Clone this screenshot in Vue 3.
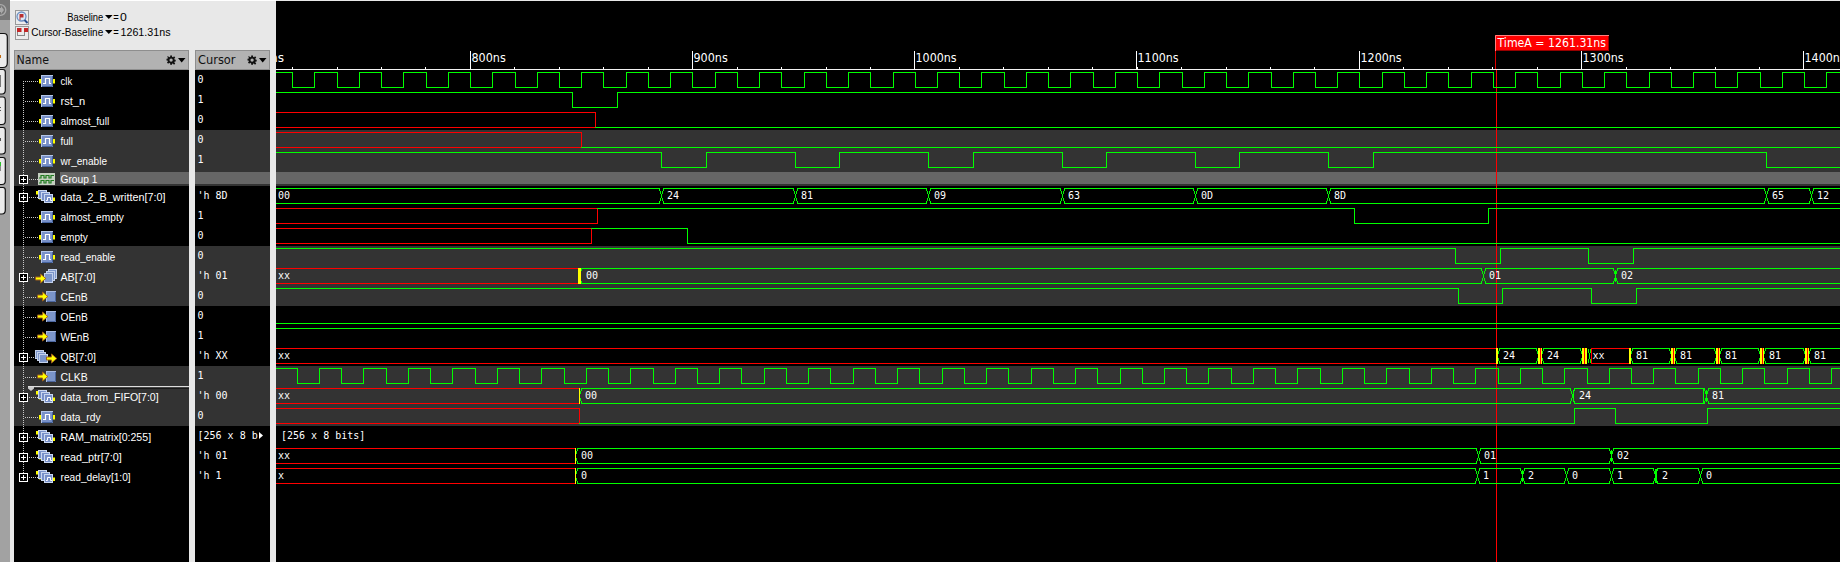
<script setup>
const LEFT = 276
const RIGHT = 1840
const HI = 2.5
const LO = 17.5

const clock = (first, step) =>
  Array.from({ length: 70 }, (_, k) => Math.floor(first + step * k)).filter((x) => x < RIGHT)

// Square wave that starts at `level` and toggles on every edge
function digital(level, edges, from = LEFT) {
  let high = level
  let d = `M${from} ${high ? HI : LO}`
  for (const x of edges) {
    high = !high
    d += `H${x + 0.5}V${high ? HI : LO}`
  }
  return d + `H${RIGHT}`
}

const unknownTo = (x) => `M${LEFT} ${HI}H${x + 0.5}V${LO}H${LEFT}`
const openUnknown = (x) => `M${LEFT} ${HI}H${x}M${LEFT} ${LO}H${x}`

// Bus rails between crossings
function bus(from, crossings, to = RIGHT, closed = false) {
  let d = ''
  const opening = (x) => `M${x + 0.5} 3V5M${x - 0.5} 5V8M${x - 1.5} 8V12M${x - 0.5} 12V15M${x + 0.5} 15V17`
  const closing = (x) => `M${x - 1.5} 3V5M${x - 0.5} 5V8M${x + 0.5} 8V12M${x - 0.5} 12V15M${x - 1.5} 15V17`
  let start = from
  if (from > LEFT) d += opening(from)
  for (const c of crossings) {
    d += `M${start} ${HI}H${c - 1}M${start} ${LO}H${c - 1}`
    d += closing(c) + opening(c + 2)
    start = c + 2
  }
  d += `M${start} ${HI}H${to}M${start} ${LO}H${to}`
  if (closed) d += closing(to + 1)
  return d
}

const g = (d) => ({ d, cls: 'green' })
const r = (d) => ({ d, cls: 'red' })
const glitch = (x) => [
  { x, w: 2, cls: 'fill-yellow' },
  { x: x + 2, w: 1, cls: 'fill-red' },
  { x: x + 3, w: 1, cls: 'fill-yellow' },
]

const rows = [
  { name: 'clk', w: 11.7, icon: 'sig', value: '0', paths: [g(digital(true, clock(292.7, 22.235)))] },
  { name: 'rst_n', w: 24.7, icon: 'sig', value: '1', paths: [g(digital(true, [572, 617]))] },
  { name: 'almost_full', w: 48.7, icon: 'sig', value: '0', paths: [r(unknownTo(595)), g(digital(false, [], 595))] },
  { name: 'full', w: 12.4, icon: 'sig', value: '0', shade: true, paths: [r(unknownTo(581)), g(digital(false, [], 581))] },
  {
    name: 'wr_enable', w: 46.5, icon: 'sig', value: '1', shade: true,
    paths: [g(digital(true, [661, 706, 795, 839, 928, 973, 1062, 1106, 1195, 1239, 1328, 1373, 1766]))],
  },
  { name: 'Group 1', w: 37, icon: 'group', value: '', shade: true, group: true, plus: true, paths: [] },
  {
    name: 'data_2_B_written[7:0]', w: 105, icon: 'bus', value: "'h 8D", plus: true,
    paths: [g(bus(LEFT, [661, 795, 928, 1062, 1195, 1328, 1766, 1811]))],
    texts: [[278, '00'], [667, '24'], [801, '81'], [934, '09'], [1068, '63'], [1201, '0D'], [1334, '8D'], [1772, '65'], [1817, '12']],
  },
  { name: 'almost_empty', w: 63.3, icon: 'sig', value: '1', paths: [r(unknownTo(597)), g(digital(true, [1354, 1488], 597))] },
  { name: 'empty', w: 27.4, icon: 'sig', value: '0', paths: [r(unknownTo(591)), g(digital(true, [687], 591))] },
  { name: 'read_enable', w: 54.8, icon: 'sig', value: '0', shade: true, paths: [g(digital(true, [1455, 1500, 1588, 1633]))] },
  {
    name: 'AB[7:0]', w: 35, icon: 'inbus', value: "'h 01", shade: true, plus: true,
    paths: [r(openUnknown(578)), g(bus(581, [1483, 1615]) + 'M1615.5 4V8M1615.5 12V16')],
    bars: [{ x: 578, w: 3, cls: 'fill-yellow' }],
    texts: [[278, 'xx'], [586, '00'], [1489, '01'], [1621, '02']],
  },
  { name: 'CEnB', w: 27.3, icon: 'in', value: '0', shade: true, paths: [g(digital(true, [1458, 1502, 1591, 1636]))] },
  { name: 'OEnB', w: 27.3, icon: 'in', value: '0', paths: [g(digital(false, []))] },
  { name: 'WEnB', w: 28.7, icon: 'in', value: '1', paths: [g(digital(true, []))] },
  {
    name: 'QB[7:0]', w: 35.4, icon: 'outbus', value: "'h XX", plus: true,
    paths: [
      r(openUnknown(1496)),
      g(bus(1499, [], 1537, true)),
      g(bus(1543, [], 1581, true)),
      g('M1588.5 3V7M1590.5 3V7M1589.5 7V13M1588.5 13V17M1590.5 13V17'),
      r(`M1629 ${HI}H1591.5V${LO}H1629`),
      g(bus(1632, [], 1670, true)),
      g(bus(1676, [], 1715, true)),
      g(bus(1721, [], 1759, true)),
      g(bus(1765, [], 1804, true)),
      g(bus(1810, [])),
    ],
    bars: [
      { x: 1496, w: 2, cls: 'fill-yellow' },
      ...glitch(1538), ...glitch(1582),
      { x: 1586, w: 1, cls: 'fill-yellow' },
      { x: 1629, w: 2, cls: 'fill-yellow' },
      ...glitch(1671), ...glitch(1716), ...glitch(1760), ...glitch(1805),
    ],
    texts: [[278, 'xx'], [1503, '24'], [1547, '24'], [1592.5, 'xx'], [1636, '81'], [1680, '81'], [1725, '81'], [1769, '81'], [1814, '81']],
  },
  { name: 'CLKB', w: 27.3, icon: 'in', value: '1', shade: true, paths: [g(digital(true, clock(297.2, 22.238)))] },
  {
    name: 'data_from_FIFO[7:0]', w: 98.2, icon: 'bus', value: "'h 00", shade: true, plus: true, marker: true,
    paths: [
      r(openUnknown(579)),
      g(bus(581, [1572, 1706]) + 'M1573.5 4V16M1703.5 3V17M1706.5 4V16'),
    ],
    bars: [{ x: 579, w: 1, cls: 'fill-yellow' }],
    texts: [[278, 'xx'], [585, '00'], [1579, '24'], [1712, '81']],
  },
  { name: 'data_rdy', w: 40.2, icon: 'sig', value: '0', shade: true, paths: [r(unknownTo(579)), g(digital(false, [1574, 1615, 1707], 579))] },
  { name: 'RAM_matrix[0:255]', w: 90.6, icon: 'bus', value: '[256 x 8 b', more: true, plus: true, paths: [], texts: [[281, '[256 x 8 bits]']] },
  {
    name: 'read_ptr[7:0]', w: 61.2, icon: 'bus', value: "'h 01", plus: true,
    paths: [r(openUnknown(575)), g(bus(577, [1478, 1611]) + 'M1611.5 4V16')],
    bars: [{ x: 575, w: 1, cls: 'fill-yellow' }],
    texts: [[278, 'xx'], [581, '00'], [1484, '01'], [1617, '02']],
  },
  {
    name: 'read_delay[1:0]', w: 70.2, icon: 'bus', value: "'h 1", plus: true,
    paths: [r(openUnknown(575)), g(bus(577, [1477, 1522, 1566, 1611, 1655, 1700]) + 'M1522.5 4V16M1655.5 3V17M1656.5 3V17')],
    bars: [{ x: 575, w: 1, cls: 'fill-yellow' }],
    texts: [[278, 'x'], [581, '0'], [1483, '1'], [1528, '2'], [1572, '0'], [1617, '1'], [1662, '2'], [1706, '0']],
  },
]

const majors = [
  [470, '800ns'], [692, '900ns'], [914, '1000ns'], [1136, '1100ns'],
  [1359, '1200ns'], [1581, '1300ns'], [1803, '1400ns'],
]
const minors = Array.from({ length: 35 }, (_, i) => Math.floor(292.6 + i * 44.45)).filter((x) => x < RIGHT)

const gearPath =
  'M4 0h2v1.4l1.2.5 1-1 1.3 1.4-1 1 .4 1.2H10v2H8.9l-.4 1.1 1 1-1.3 1.4-1.1-1L6 8.600V10H4V8.600L2.900 8l-1.100 1L.500 7.600l1-1-.400-1.100H0v-2h1.100l.400-1.200-1-1L1.800.900l1 1L4 1.400z'
</script>

<template>
  <div class="viewer">
    <aside class="toolbar">
      <svg width="10" height="562" viewBox="0 0 10 562">
        <rect width="10" height="562" fill="#a2a2a2" />
        <rect width="10" height="20" fill="#777" />
        <circle cx="0.500" cy="10" r="5.300" fill="none" stroke="#aaa" stroke-width="1.300" />
        <path d="M-2 8H1V6L4 10L1 14V12H-2Z" fill="#aaa" />
        <g fill="#ebebeb" stroke="#111" stroke-width="1.200">
          <path d="M-2 33.500H4Q7.300 33.500 7.300 37V63Q7.300 67.500 3 67.500H-2Z" />
          <path d="M-2 69.500H3Q5.300 69.500 5.300 72V90Q5.300 94 2 94H-2Z" />
          <path d="M-2 97H3Q5.300 97 5.300 100V121Q5.300 124.500 2 124.500H-2Z" />
          <path d="M-2 127.500H3Q5.300 127.500 5.300 130V151Q5.300 154 2 154H-2Z" />
          <path d="M-2 157.500H3Q5.300 157.500 5.300 160V181Q5.300 184.500 2 184.500H-2Z" />
          <path d="M-2 187.500H3Q5.300 187.500 5.300 190V210Q5.300 214 2 214H-2Z" />
        </g>
        <rect y="55" width="1" height="3" fill="#c26a10" />
        <rect y="75" width="1" height="12" fill="#777" />
        <path d="M0 107.500H1M0 110.500H1" stroke="#555" />
        <rect y="138" width="1" height="3" fill="#555" />
        <rect y="162" width="1" height="4" fill="#2bc22b" />
        <rect y="166" width="1" height="5" fill="#888" />
      </svg>
    </aside>

    <section class="panel">
      <header class="summary">
        <svg width="266" height="50" viewBox="10 0 266 50">
          <rect x="10" y="0" width="266" height="1" fill="#fff" />
          <g fill="#ececec" stroke="#999">
            <rect x="15.500" y="10.500" width="13" height="14" />
            <rect x="15.500" y="26.500" width="13" height="13" />
          </g>
          <circle cx="21.500" cy="16.500" r="4.500" fill="#dce8f5" stroke="#6d8fc0" stroke-width="1.300" />
          <path d="M24.500 20L27.500 23" stroke="#284f8e" stroke-width="2" />
          <path d="M19.500 14H23.500V17.500H20.500V20H19.500Z" fill="#b93030" />
          <path d="M17.500 36V28M24.500 36V28M18 35.500H24" stroke="#888" fill="none" />
          <path d="M17 28H21.500V32H17ZM24 28H28V32H24Z" fill="#c32626" />
          <g class="ui">
            <text x="67.300" y="21" textLength="36" lengthAdjust="spacingAndGlyphs">Baseline</text>
            <text x="113.300" y="21" textLength="5.500" lengthAdjust="spacingAndGlyphs">=</text>
            <text x="120" y="21" textLength="6.800" lengthAdjust="spacingAndGlyphs">0</text>
            <text x="31.300" y="36" textLength="72" lengthAdjust="spacingAndGlyphs">Cursor-Baseline</text>
            <text x="113.300" y="36" textLength="5.500" lengthAdjust="spacingAndGlyphs">=</text>
            <text x="120.500" y="36" textLength="50" lengthAdjust="spacingAndGlyphs">1261.31ns</text>
          </g>
          <path d="M105 15H112.600L108.800 19ZM105 30H112.600L108.800 34Z" fill="#000" />
        </svg>
      </header>

      <div class="columns">
        <div class="column names">
          <div class="heading">
            <svg width="175" height="20" viewBox="14 50 175 20">
              <text class="title" x="16.500" y="64" textLength="32.500" lengthAdjust="spacingAndGlyphs">Name</text>
              <g transform="translate(166.500 55.500) scale(.92)"><path :d="gearPath" fill="#111" /><circle cx="5" cy="5" r="1.800" fill="#b2b2b2" /></g>
              <path d="M178 58H185.500L181.700 62.500Z" fill="#000" />
            </svg>
          </div>
          <div v-for="row in rows" :key="row.name" class="row" :class="{ shade: row.shade, group: row.group }">
            <svg width="175" height="20" :viewBox="row.group ? '14 2 175 16' : '14 0 175 20'">
              <rect v-if="row.group" x="60" y="4" width="129" height="12" fill="#666" />
              <path class="dots" :d="row.name === 'clk' ? 'M23.500 11V22' : row.name === 'read_delay[1:0]' ? 'M23.500 0V7' : 'M23.500 0V20'" />
              <path class="dots" :d="row.plus ? 'M29 11.500H38' : 'M25 11.500H39'" />
              <g v-if="row.plus" shape-rendering="crispEdges">
                <rect x="19.500" y="7.500" width="8" height="8" fill="#000" stroke="#fff" />
                <path d="M21 11.500H26M23.500 9V14" stroke="#fff" />
              </g>

              <g v-if="row.icon === 'sig'">
                <path d="M39 9H41V13.500H39ZM53 9H55V13.500H53Z" fill="#ff0" />
                <rect x="41.500" y="5.500" width="11" height="11" fill="#7890c8" stroke="#b5c6e6" />
                <path d="M42 16.500H52.500V6" fill="none" stroke="#46649f" />
                <path d="M43 13.500H45.500V8.500H49.500V13.500H51" fill="none" stroke="#fff" stroke-width="1.200" />
              </g>
              <g v-else-if="row.icon === 'bus'">
                <path d="M36 5H38V8.500H36ZM39 10H41V13.500H39ZM53 11.500H55V15H53Z" fill="#ff0" />
                <g fill="#7890c8" stroke="#cbd8f0">
                  <rect x="38.500" y="4.500" width="8" height="8" />
                  <rect x="41.500" y="6.500" width="8" height="8" />
                  <rect x="44.500" y="8.500" width="8" height="8" />
                </g>
                <path d="M46 14.500H47.500V11.500H50.500V14.500H52" fill="none" stroke="#fff" />
              </g>
              <g v-else-if="row.icon === 'group'">
                <rect x="38" y="5" width="17" height="12" fill="#c4cfc0" />
                <path d="M39 10H41V7.500H44V10H46V7.500H49V10H51V7.500H54M39 15H41V12.500H44V15H46V12.500H49V15H51V12.500H54" fill="none" stroke="#1f7a1f" stroke-width="1.200" />
              </g>
              <g v-else-if="row.icon === 'in'">
                <rect x="46.500" y="5.500" width="9" height="10" fill="#7c95c9" stroke="#a9badf" />
                <path d="M47 15.500H55.500V6" fill="none" stroke="#4c669e" />
                <path class="arrow" d="M37.500 9H42.500V6L47.800 10.500L42.500 15V12H37.500Z" />
              </g>
              <g v-else-if="row.icon === 'inbus'">
                <g fill="#7c95c9" stroke="#c3d0ea">
                  <rect x="48.500" y="3.500" width="8" height="9" />
                  <rect x="46.500" y="5.500" width="8" height="9" />
                  <rect x="44.500" y="7.500" width="8" height="9" />
                </g>
                <path class="arrow" d="M35.500 11H40.500V8L45.800 12.500L40.500 17V14H35.500Z" />
              </g>
              <g v-else>
                <g fill="#7c95c9" stroke="#c3d0ea">
                  <rect x="35.500" y="4.500" width="8" height="8" />
                  <rect x="37.500" y="6.500" width="8" height="8" />
                  <rect x="39.500" y="8.500" width="8" height="8" />
                </g>
                <path class="arrow" d="M46.500 11H51.500V8L56.800 12.500L51.500 17V14H46.500Z" />
              </g>

              <text class="label" x="60.500" y="15" :textLength="row.w" lengthAdjust="spacingAndGlyphs">{{ row.name }}</text>
              <g v-if="row.marker">
                <rect x="28" y="0" width="161" height="1.500" fill="#ddd" />
                <rect x="34" y="1.500" width="155" height="1" fill="#000" />
                <path d="M28 1H34V2.500L31 5L28 2.500Z" fill="#ccc" />
              </g>
            </svg>
          </div>
        </div>

        <div class="column values">
          <div class="heading">
            <svg width="75" height="20" viewBox="195 50 75 20">
              <text class="title" x="198" y="64" textLength="37.500" lengthAdjust="spacingAndGlyphs">Cursor</text>
              <g transform="translate(247.500 55.500) scale(.92)"><path :d="gearPath" fill="#111" /><circle cx="5" cy="5" r="1.800" fill="#b2b2b2" /></g>
              <path d="M259 58H266.500L262.700 62.500Z" fill="#000" />
            </svg>
          </div>
          <div v-for="row in rows" :key="row.name" class="row" :class="{ shade: row.shade, group: row.group, band: row.group }">
            <svg width="75" height="20" viewBox="195 0 75 20">
              <text class="mono" x="197.500" y="13" xml:space="preserve">{{ row.value }}</text>
              <path v-if="row.more" d="M259 6L263 9.500L259 13Z" fill="#fff" />
            </svg>
          </div>
        </div>
      </div>
    </section>

    <main class="waves">
      <svg class="ruler" width="1564" height="69" viewBox="276 1 1564 69">
        <g shape-rendering="crispEdges">
          <rect x="276" y="69" width="1564" height="1" fill="#f2f2f2" />
          <rect v-for="x in minors" :key="x" :x="x" y="67" width="1" height="2" fill="#fff" />
          <rect v-for="m in majors" :key="m[0]" :x="m[0]" y="51" width="1" height="18" fill="#fff" />
        </g>
        <text class="time" x="270" y="62" textLength="14" lengthAdjust="spacingAndGlyphs">ns</text>
        <text
          v-for="m in majors" :key="m[1]" class="time" :x="m[0] + 1.500" y="62"
          :textLength="m[1].length * 6.850" lengthAdjust="spacingAndGlyphs"
        >{{ m[1] }}</text>
        <rect x="1495" y="51" width="1" height="18" fill="#e00000" />
        <rect x="1495" y="35" width="114" height="16" fill="#f00" />
        <path d="M1495.500 51V35.500H1609" stroke="#ff8080" fill="none" />
        <path d="M1496 50.500H1608.500V36" stroke="#900" fill="none" />
        <text class="time" x="1497.500" y="47" textLength="108.500" lengthAdjust="spacingAndGlyphs">TimeA = 1261.31ns</text>
      </svg>
      <div class="cursor-line"></div>
      <div v-for="row in rows" :key="row.name" class="row" :class="{ shade: row.shade, group: row.group, band: row.group }">
        <svg class="trace" width="1564" height="20" viewBox="276 0 1564 20">
          <g shape-rendering="crispEdges">
            <path v-for="(p, i) in row.paths" :key="i" :d="p.d" :class="p.cls" />
            <rect v-for="b in row.bars || []" :key="b.x" :x="b.x" y="2" :width="b.w" height="16" :class="b.cls" />
          </g>
          <text v-for="t in row.texts || []" :key="t[0]" class="mono" :x="t[0]" y="13">{{ t[1] }}</text>
        </svg>
      </div>
    </main>
  </div>
</template>

<style>
body {
  margin: 0;
  background: #000;
}
</style>

<style scoped>
.viewer {
  display: flex;
  width: 1840px;
  height: 562px;
  overflow: hidden;
  background: #e8e8e8;
}
svg {
  display: block;
}
.toolbar {
  width: 10px;
  flex: none;
}
.panel {
  width: 266px;
  flex: none;
  display: flex;
  flex-direction: column;
  background: #e8e8e8;
}
.summary {
  height: 50px;
  box-sizing: border-box;
}
.columns {
  flex: 1;
  display: flex;
  gap: 6px;
  padding-left: 4px;
}
.column {
  background: #000;
}
.names {
  width: 175px;
}
.values {
  width: 75px;
}
.heading {
  height: 20px;
  background: #b2b2b2;
  box-shadow: inset 0 0 0 1px #8e8e8e;
}
.row {
  height: 20px;
  overflow: hidden;
}
.row.shade {
  background: #333;
}
.row.group {
  height: 16px;
}
.row.group svg {
  height: 16px;
}
.row.band {
  background: linear-gradient(#333 2px, #666 2px, #666 14px, #333 14px);
}
.waves {
  position: relative;
  flex: 1;
  margin-top: 1px;
  background: #000;
  overflow: hidden;
}
.cursor-line {
  position: absolute;
  top: 69px;
  bottom: 0;
  left: 1220px;
  width: 1px;
  background: #f00;
}
.trace {
  position: relative;
}
.green {
  fill: none;
  stroke: #0f0;
}
.red {
  fill: none;
  stroke: #f00;
}
.fill-yellow {
  fill: #ff0;
}
.fill-red {
  fill: #f00;
}
.arrow {
  fill: #ff0;
  stroke: #a0601a;
  stroke-width: 1;
}
.dots {
  fill: none;
  stroke: #c8c8c8;
  stroke-dasharray: 1 1;
  shape-rendering: crispEdges;
}
.ui text {
  font: 11.5px "Liberation Sans", Arial, sans-serif;
  fill: #000;
}
.title {
  font: 11.5px "DejaVu Sans", sans-serif;
  fill: #111;
}
.label {
  font: 11.5px "Liberation Sans", Arial, sans-serif;
  fill: #fff;
}
.mono {
  font: 10px "DejaVu Sans Mono", monospace;
  fill: #fff;
  white-space: pre;
}
.time {
  font: 12px "DejaVu Sans", sans-serif;
  fill: #fff;
}
</style>
